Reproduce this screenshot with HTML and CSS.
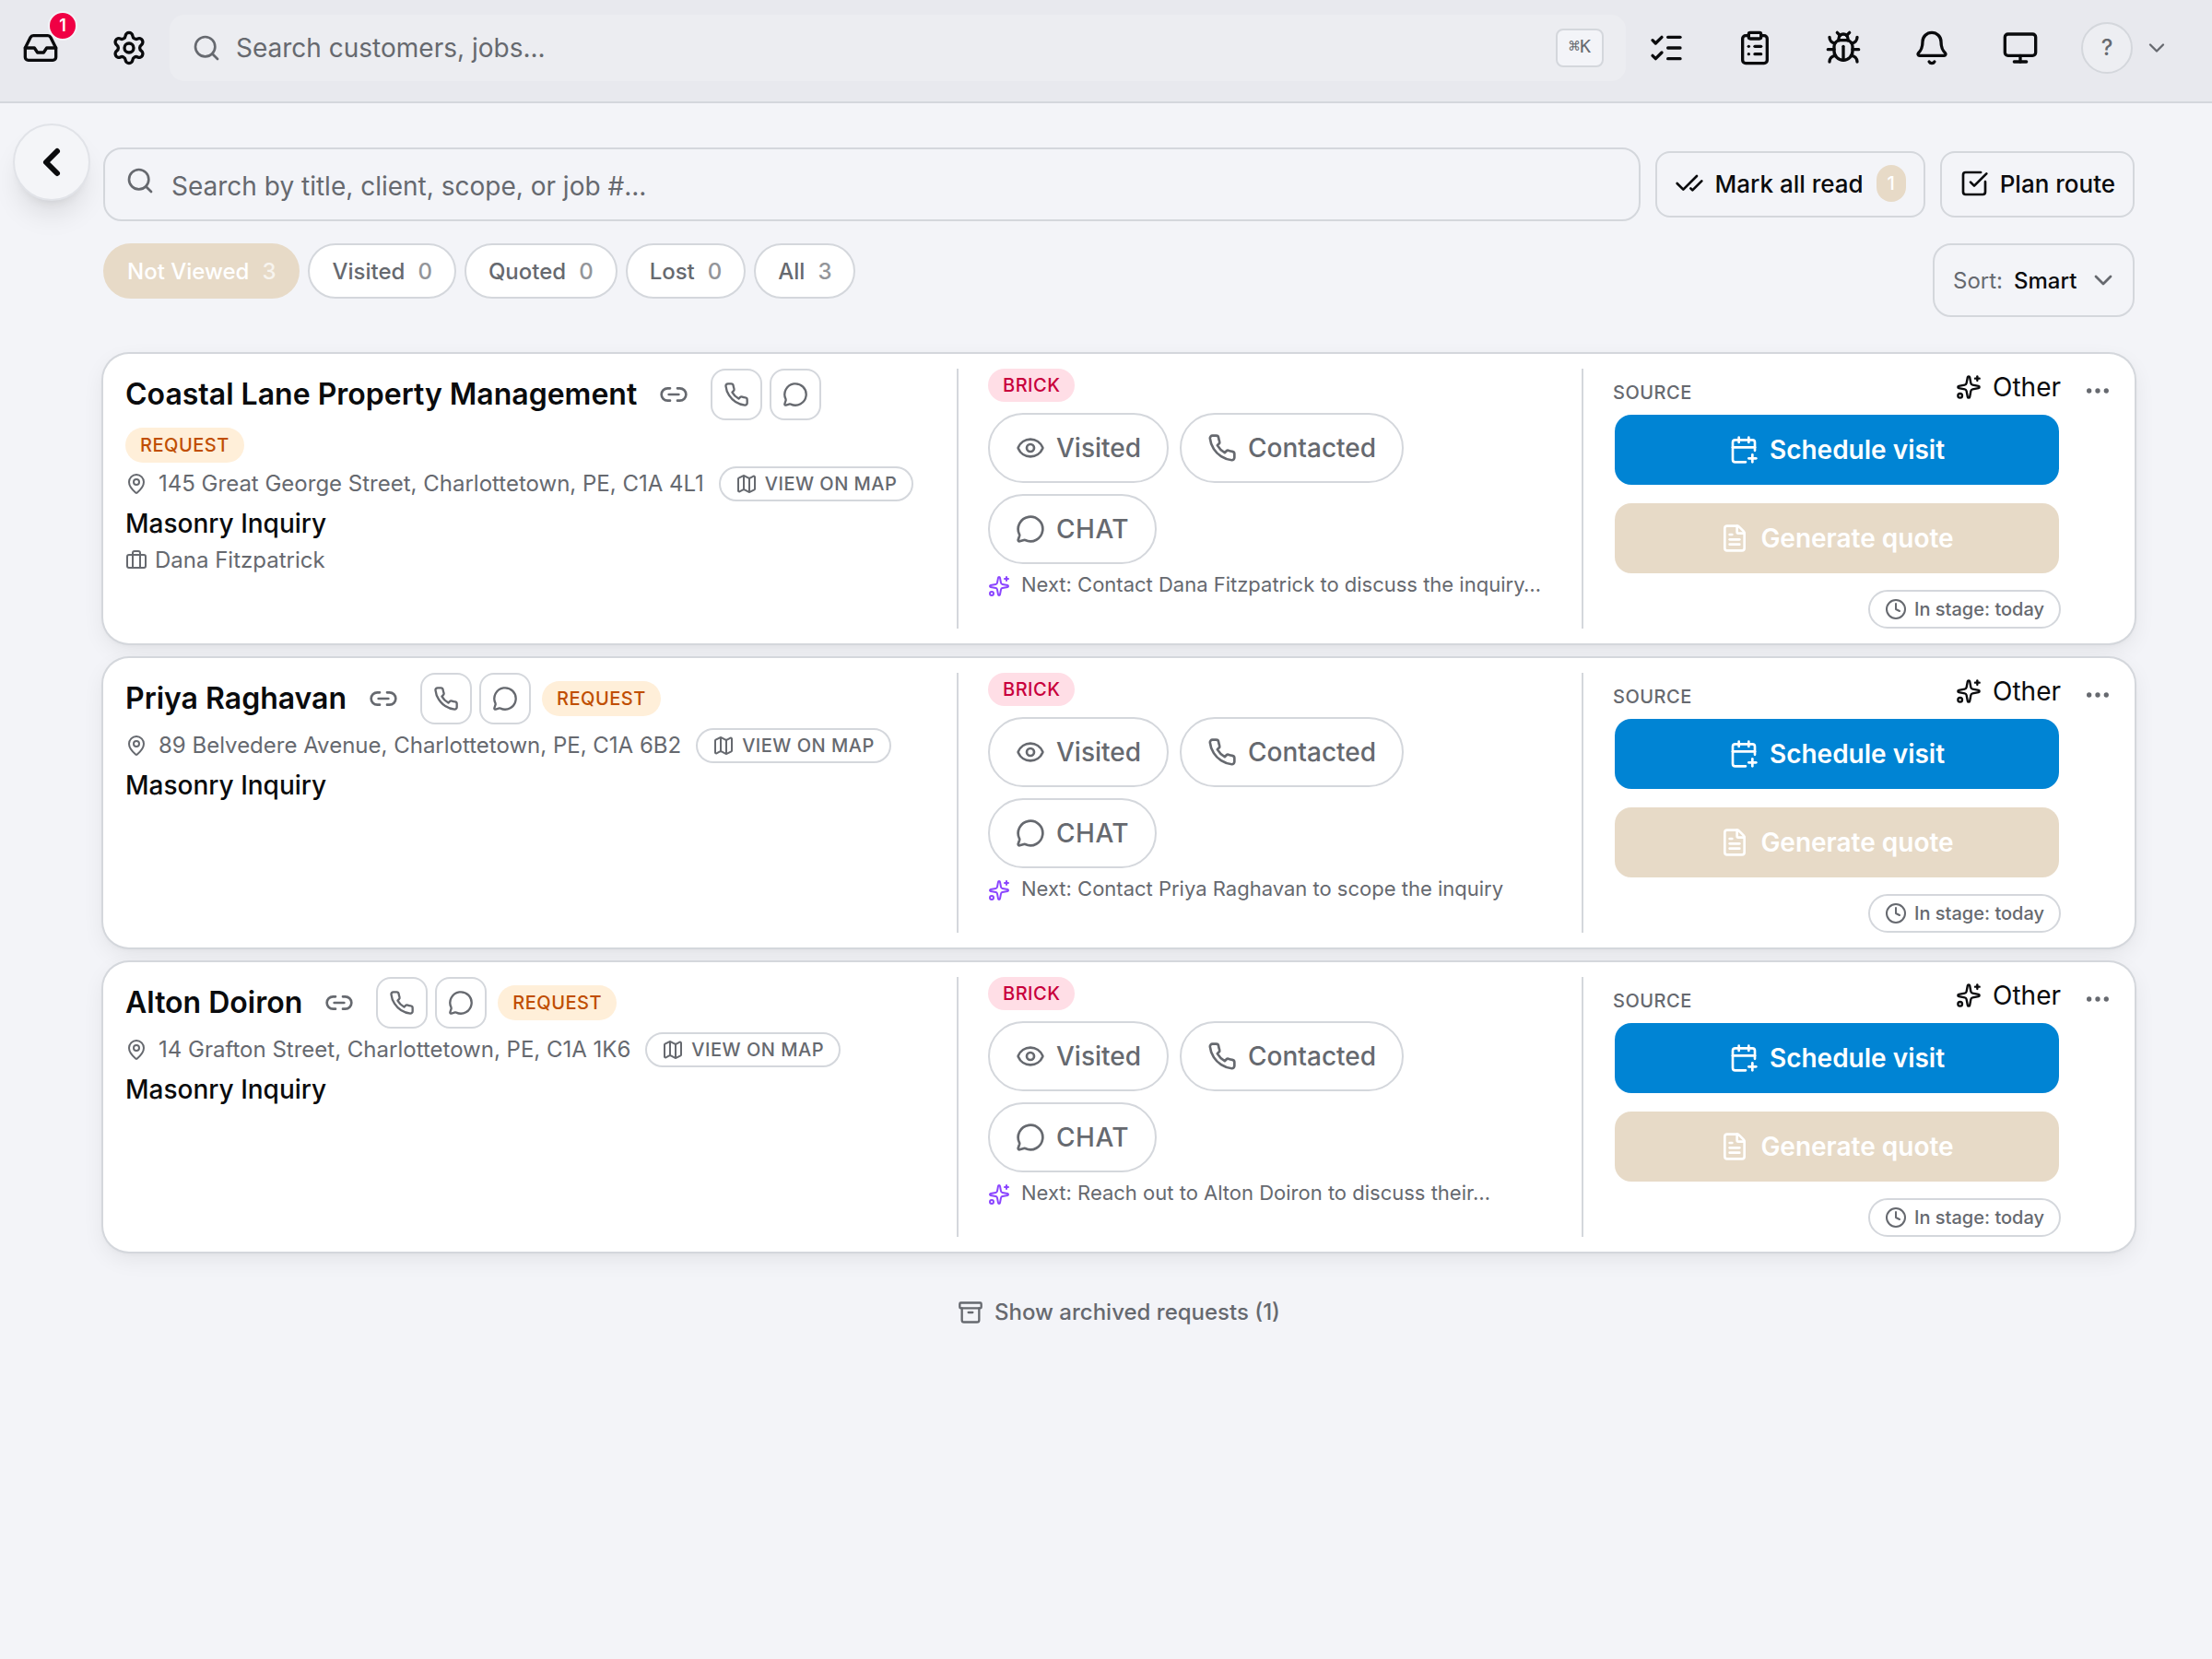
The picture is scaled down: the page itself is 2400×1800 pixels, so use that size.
FILE: index.html
```html
<!DOCTYPE html>
<html lang="en">
<head>
<meta charset="utf-8">
<meta name="viewport" content="width=device-width, initial-scale=1">
<title>Requests</title>
<link rel="stylesheet" href="styles.css">
</head>
<body>
<svg class="sprite" aria-hidden="true">
  <symbol id="i-inbox" viewBox="0 0 24 24"><path d="M22 12h-6l-2 3h-4l-2-3H2"/><path d="M5.45 5.11 2 12v6a2 2 0 0 0 2 2h16a2 2 0 0 0 2-2v-6l-3.45-6.89A2 2 0 0 0 16.76 4H7.24a2 2 0 0 0-1.79 1.11z"/></symbol>
  <symbol id="i-settings" viewBox="0 0 24 24"><path d="M9.671 4.136a2.34 2.34 0 0 1 4.659 0 2.34 2.34 0 0 0 3.319 1.915 2.34 2.34 0 0 1 2.33 4.033 2.34 2.34 0 0 0 0 3.831 2.34 2.34 0 0 1-2.33 4.033 2.34 2.34 0 0 0-3.319 1.915 2.34 2.34 0 0 1-4.659 0 2.34 2.34 0 0 0-3.32-1.915 2.34 2.34 0 0 1-2.33-4.033 2.34 2.34 0 0 0 0-3.831A2.34 2.34 0 0 1 6.35 6.051a2.34 2.34 0 0 0 3.319-1.915"/><circle cx="12" cy="12" r="3"/></symbol>
  <symbol id="i-search" viewBox="0 0 24 24"><path d="m21 21-4.34-4.34"/><circle cx="11" cy="11" r="8"/></symbol>
  <symbol id="i-list-checks" viewBox="0 0 24 24"><path d="M13 5h8"/><path d="M13 12h8"/><path d="M13 19h8"/><path d="m3 17 2 2 4-4"/><path d="m3 7 2 2 4-4"/></symbol>
  <symbol id="i-clipboard" viewBox="0 0 24 24"><rect width="8" height="4" x="8" y="2" rx="1" ry="1"/><path d="M16 4h2a2 2 0 0 1 2 2v14a2 2 0 0 1-2 2H6a2 2 0 0 1-2-2V6a2 2 0 0 1 2-2h2"/><path d="M12 11h4"/><path d="M12 16h4"/><path d="M8 11h.01"/><path d="M8 16h.01"/></symbol>
  <symbol id="i-bug" viewBox="0 0 24 24"><path d="M12 20v-9"/><path d="M14 7a4 4 0 0 1 4 4v3a6 6 0 0 1-12 0v-3a4 4 0 0 1 4-4z"/><path d="M14.12 3.88 16 2"/><path d="M21 21a4 4 0 0 0-3.81-4"/><path d="M21 5a4 4 0 0 1-3.55 3.97"/><path d="M22 13h-4"/><path d="M3 21a4 4 0 0 1 3.81-4"/><path d="M3 5a4 4 0 0 0 3.55 3.97"/><path d="M6 13H2"/><path d="m8 2 1.88 1.88"/><path d="M9 7.13V6a3 3 0 1 1 6 0v1.13"/></symbol>
  <symbol id="i-bell" viewBox="0 0 24 24"><path d="M10.268 21a2 2 0 0 0 3.464 0"/><path d="M3.262 15.326A1 1 0 0 0 4 17h16a1 1 0 0 0 .74-1.673C19.41 13.956 18 12.499 18 8A6 6 0 0 0 6 8c0 4.499-1.411 5.956-2.738 7.326"/></symbol>
  <symbol id="i-monitor" viewBox="0 0 24 24"><rect width="20" height="14" x="2" y="3" rx="2"/><path d="M8 21h8"/><path d="M12 17v4"/></symbol>
  <symbol id="i-chevron-down" viewBox="0 0 24 24"><path d="m6 9 6 6 6-6"/></symbol>
  <symbol id="i-chevron-left" viewBox="0 0 24 24"><path d="m15 18-6-6 6-6"/></symbol>
  <symbol id="i-check-check" viewBox="0 0 24 24"><path d="M18 6 7 17l-5-5"/><path d="m22 10-7.5 7.5L13 16"/></symbol>
  <symbol id="i-square-check" viewBox="0 0 24 24"><path d="M21 10.656V19a2 2 0 0 1-2 2H5a2 2 0 0 1-2-2V5a2 2 0 0 1 2-2h12.344"/><path d="m9 11 3 3L22 4"/></symbol>
  <symbol id="i-link" viewBox="0 0 24 24"><path d="M9 17H7A5 5 0 0 1 7 7h2"/><path d="M15 7h2a5 5 0 1 1 0 10h-2"/><path d="M8 12h8"/></symbol>
  <symbol id="i-phone" viewBox="0 0 24 24"><path d="M22 16.92v3a2 2 0 0 1-2.18 2 19.79 19.79 0 0 1-8.63-3.07 19.5 19.5 0 0 1-6-6 19.79 19.79 0 0 1-3.07-8.67A2 2 0 0 1 4.11 2h3a2 2 0 0 1 2 1.72 12.84 12.84 0 0 0 .7 2.81 2 2 0 0 1-.45 2.11L8.09 9.91a16 16 0 0 0 6 6l1.27-1.27a2 2 0 0 1 2.11-.45 12.84 12.84 0 0 0 2.81.7A2 2 0 0 1 22 16.92z"/></symbol>
  <symbol id="i-chat" viewBox="0 0 24 24"><path d="M2.992 16.342a2 2 0 0 1 .094 1.167l-1.065 3.29a1 1 0 0 0 1.236 1.168l3.413-.998a2 2 0 0 1 1.099.092 10 10 0 1 0-4.777-4.719"/></symbol>
  <symbol id="i-pin" viewBox="0 0 24 24"><path d="M20 10c0 4.993-5.539 10.193-7.399 11.799a1 1 0 0 1-1.202 0C9.539 20.193 4 14.993 4 10a8 8 0 0 1 16 0"/><circle cx="12" cy="10" r="3"/></symbol>
  <symbol id="i-map" viewBox="0 0 24 24"><path d="M14.106 5.553a2 2 0 0 0 1.788 0l3.659-1.83A1 1 0 0 1 21 4.619v12.764a1 1 0 0 1-.553.894l-4.553 2.277a2 2 0 0 1-1.788 0l-4.212-2.106a2 2 0 0 0-1.788 0l-3.659 1.83A1 1 0 0 1 3 19.381V6.618a1 1 0 0 1 .553-.894l4.553-2.277a2 2 0 0 1 1.788 0z"/><path d="M15 5.764v15"/><path d="M9 3.236v15"/></symbol>
  <symbol id="i-briefcase" viewBox="0 0 24 24"><path d="M16 20V4a2 2 0 0 0-2-2h-4a2 2 0 0 0-2 2v16"/><rect width="20" height="14" x="2" y="6" rx="2"/></symbol>
  <symbol id="i-eye" viewBox="0 0 24 24"><path d="M2.062 12.348a1 1 0 0 1 0-.696 10.75 10.75 0 0 1 19.876 0 1 1 0 0 1 0 .696 10.75 10.75 0 0 1-19.876 0"/><circle cx="12" cy="12" r="3"/></symbol>
  <symbol id="i-sparkles" viewBox="0 0 24 24"><path d="M11.017 2.814a1 1 0 0 1 1.966 0l1.051 5.558a2 2 0 0 0 1.594 1.594l5.558 1.051a1 1 0 0 1 0 1.966l-5.558 1.051a2 2 0 0 0-1.594 1.594l-1.051 5.558a1 1 0 0 1-1.966 0l-1.051-5.558a2 2 0 0 0-1.594-1.594l-5.558-1.051a1 1 0 0 1 0-1.966l5.558-1.051a2 2 0 0 0 1.594-1.594z"/><path d="M20 2v4"/><path d="M22 4h-4"/><circle cx="4" cy="20" r="2"/></symbol>
  <symbol id="i-calendar-plus" viewBox="0 0 24 24"><path d="M16 19h6"/><path d="M16 2v4"/><path d="M19 16v6"/><path d="M21 12.598V6a2 2 0 0 0-2-2H5a2 2 0 0 0-2 2v14a2 2 0 0 0 2 2h8.5"/><path d="M3 10h18"/><path d="M8 2v4"/></symbol>
  <symbol id="i-file" viewBox="0 0 24 24"><path d="M6 22a2 2 0 0 1-2-2V4a2 2 0 0 1 2-2h8a2.4 2.4 0 0 1 1.704.706l3.588 3.588A2.4 2.4 0 0 1 20 8v12a2 2 0 0 1-2 2z"/><path d="M14 2v5a1 1 0 0 0 1 1h5"/><path d="M10 9H8"/><path d="M16 13H8"/><path d="M16 17H8"/></symbol>
  <symbol id="i-clock" viewBox="0 0 24 24"><circle cx="12" cy="12" r="10"/><path d="M12 6v6l4 2"/></symbol>
  <symbol id="i-more" viewBox="0 0 24 24"><circle cx="12" cy="12" r="1"/><circle cx="19" cy="12" r="1"/><circle cx="5" cy="12" r="1"/></symbol>
  <symbol id="i-archive" viewBox="0 0 24 24"><rect width="20" height="5" x="2" y="3" rx="1"/><path d="M4 8v11a2 2 0 0 0 2 2h12a2 2 0 0 0 2-2V8"/><path d="M10 12h4"/></symbol>
</svg>

<header class="topbar">
  <button class="nav-btn" type="button" aria-label="Inbox"><svg class="icon icon-xl"><use href="#i-inbox"/></svg><span class="nav-badge">1</span></button>
  <button class="nav-btn" type="button" aria-label="Settings"><svg class="icon icon-xl"><use href="#i-settings"/></svg></button>
  <label class="global-search">
    <svg class="icon icon-lg"><use href="#i-search"/></svg>
    <input type="search" placeholder="Search customers, jobs..." aria-label="Search customers, jobs">
    <kbd>⌘K</kbd>
  </label>
  <button class="nav-btn" type="button" aria-label="Tasks"><svg class="icon icon-xl"><use href="#i-list-checks"/></svg></button>
  <button class="nav-btn" type="button" aria-label="Clipboard"><svg class="icon icon-xl"><use href="#i-clipboard"/></svg></button>
  <button class="nav-btn" type="button" aria-label="Report a bug"><svg class="icon icon-xl"><use href="#i-bug"/></svg></button>
  <button class="nav-btn" type="button" aria-label="Notifications"><svg class="icon icon-xl"><use href="#i-bell"/></svg></button>
  <button class="nav-btn" type="button" aria-label="Display"><svg class="icon icon-xl"><use href="#i-monitor"/></svg></button>
  <button class="account" type="button" aria-label="Account"><span class="avatar">?</span><svg class="icon icon-md"><use href="#i-chevron-down"/></svg></button>
</header>

<button class="back" type="button" aria-label="Back"><svg class="icon"><use href="#i-chevron-left"/></svg></button>

<main class="page">
  <div class="toolbar">
    <label class="job-search">
      <svg class="icon icon-lg"><use href="#i-search"/></svg>
      <input type="search" placeholder="Search by title, client, scope, or job #..." aria-label="Search requests">
    </label>
    <button class="tool-btn" type="button"><svg class="icon icon-lg"><use href="#i-check-check"/></svg>Mark all read<span class="tool-count">1</span></button>
    <button class="tool-btn" type="button"><svg class="icon icon-lg"><use href="#i-square-check"/></svg>Plan route</button>
  </div>

  <div class="filters">
    <div class="chips">
      <button class="chip chip-active" type="button">Not Viewed<span>3</span></button>
      <button class="chip" type="button">Visited<span>0</span></button>
      <button class="chip" type="button">Quoted<span>0</span></button>
      <button class="chip" type="button">Lost<span>0</span></button>
      <button class="chip" type="button">All<span>3</span></button>
    </div>
    <label class="sort"><span>Sort:</span><select><option>Smart</option></select><svg class="icon icon-lg"><use href="#i-chevron-down"/></svg></label>
  </div>

  <section class="cards">
    <article class="card">
      <div class="client">
        <div class="client-head">
          <h2>Coastal Lane Property Management</h2>
          <button class="link-btn" type="button" aria-label="Copy link"><svg class="icon icon-lg"><use href="#i-link"/></svg></button>
          <div class="contact-btns">
            <button class="square-btn" type="button" aria-label="Call"><svg class="icon icon-md"><use href="#i-phone"/></svg></button>
            <button class="square-btn" type="button" aria-label="Message"><svg class="icon icon-md"><use href="#i-chat"/></svg></button>
          </div>
          <span class="tag tag-request">REQUEST</span>
        </div>
        <div class="address"><svg class="icon icon-sm"><use href="#i-pin"/></svg><span>145 Great George Street, Charlottetown, PE, C1A 4L1</span><a class="map-link" href="#map"><svg class="icon icon-sm"><use href="#i-map"/></svg>VIEW ON MAP</a></div>
        <h3>Masonry Inquiry</h3>
        <p class="person"><svg class="icon icon-sm"><use href="#i-briefcase"/></svg>Dana Fitzpatrick</p>
      </div>
      <div class="status">
        <span class="tag tag-brick">BRICK</span>
        <div class="status-btns">
          <button class="pill-btn" type="button"><svg class="icon icon-lg"><use href="#i-eye"/></svg>Visited</button>
          <button class="pill-btn" type="button"><svg class="icon icon-lg"><use href="#i-phone"/></svg>Contacted</button>
          <button class="pill-btn pill-caps" type="button"><svg class="icon icon-lg"><use href="#i-chat"/></svg>CHAT</button>
        </div>
        <p class="next"><svg class="icon icon-sm"><use href="#i-sparkles"/></svg>Next: Contact Dana Fitzpatrick to discuss the inquiry…</p>
      </div>
      <div class="actions">
        <div class="source"><span class="source-label">SOURCE</span><span class="source-value"><svg class="icon icon-md"><use href="#i-sparkles"/></svg>Other</span></div>
        <button class="action action-primary" type="button"><svg class="icon icon-lg"><use href="#i-calendar-plus"/></svg>Schedule visit</button>
        <button class="action action-quote" type="button"><svg class="icon icon-lg"><use href="#i-file"/></svg>Generate quote</button>
        <span class="stage"><svg class="icon icon-sm"><use href="#i-clock"/></svg>In stage: today</span>
      </div>
      <button class="more" type="button" aria-label="More"><svg class="icon icon-lg"><use href="#i-more"/></svg></button>
    </article>

    <article class="card">
      <div class="client">
        <div class="client-head">
          <h2>Priya Raghavan</h2>
          <button class="link-btn" type="button" aria-label="Copy link"><svg class="icon icon-lg"><use href="#i-link"/></svg></button>
          <div class="contact-btns">
            <button class="square-btn" type="button" aria-label="Call"><svg class="icon icon-md"><use href="#i-phone"/></svg></button>
            <button class="square-btn" type="button" aria-label="Message"><svg class="icon icon-md"><use href="#i-chat"/></svg></button>
          </div>
          <span class="tag tag-request">REQUEST</span>
        </div>
        <div class="address"><svg class="icon icon-sm"><use href="#i-pin"/></svg><span>89 Belvedere Avenue, Charlottetown, PE, C1A 6B2</span><a class="map-link" href="#map"><svg class="icon icon-sm"><use href="#i-map"/></svg>VIEW ON MAP</a></div>
        <h3>Masonry Inquiry</h3>
      </div>
      <div class="status">
        <span class="tag tag-brick">BRICK</span>
        <div class="status-btns">
          <button class="pill-btn" type="button"><svg class="icon icon-lg"><use href="#i-eye"/></svg>Visited</button>
          <button class="pill-btn" type="button"><svg class="icon icon-lg"><use href="#i-phone"/></svg>Contacted</button>
          <button class="pill-btn pill-caps" type="button"><svg class="icon icon-lg"><use href="#i-chat"/></svg>CHAT</button>
        </div>
        <p class="next"><svg class="icon icon-sm"><use href="#i-sparkles"/></svg>Next: Contact Priya Raghavan to scope the inquiry</p>
      </div>
      <div class="actions">
        <div class="source"><span class="source-label">SOURCE</span><span class="source-value"><svg class="icon icon-md"><use href="#i-sparkles"/></svg>Other</span></div>
        <button class="action action-primary" type="button"><svg class="icon icon-lg"><use href="#i-calendar-plus"/></svg>Schedule visit</button>
        <button class="action action-quote" type="button"><svg class="icon icon-lg"><use href="#i-file"/></svg>Generate quote</button>
        <span class="stage"><svg class="icon icon-sm"><use href="#i-clock"/></svg>In stage: today</span>
      </div>
      <button class="more" type="button" aria-label="More"><svg class="icon icon-lg"><use href="#i-more"/></svg></button>
    </article>

    <article class="card">
      <div class="client">
        <div class="client-head">
          <h2>Alton Doiron</h2>
          <button class="link-btn" type="button" aria-label="Copy link"><svg class="icon icon-lg"><use href="#i-link"/></svg></button>
          <div class="contact-btns">
            <button class="square-btn" type="button" aria-label="Call"><svg class="icon icon-md"><use href="#i-phone"/></svg></button>
            <button class="square-btn" type="button" aria-label="Message"><svg class="icon icon-md"><use href="#i-chat"/></svg></button>
          </div>
          <span class="tag tag-request">REQUEST</span>
        </div>
        <div class="address"><svg class="icon icon-sm"><use href="#i-pin"/></svg><span>14 Grafton Street, Charlottetown, PE, C1A 1K6</span><a class="map-link" href="#map"><svg class="icon icon-sm"><use href="#i-map"/></svg>VIEW ON MAP</a></div>
        <h3>Masonry Inquiry</h3>
      </div>
      <div class="status">
        <span class="tag tag-brick">BRICK</span>
        <div class="status-btns">
          <button class="pill-btn" type="button"><svg class="icon icon-lg"><use href="#i-eye"/></svg>Visited</button>
          <button class="pill-btn" type="button"><svg class="icon icon-lg"><use href="#i-phone"/></svg>Contacted</button>
          <button class="pill-btn pill-caps" type="button"><svg class="icon icon-lg"><use href="#i-chat"/></svg>CHAT</button>
        </div>
        <p class="next"><svg class="icon icon-sm"><use href="#i-sparkles"/></svg>Next: Reach out to Alton Doiron to discuss their…</p>
      </div>
      <div class="actions">
        <div class="source"><span class="source-label">SOURCE</span><span class="source-value"><svg class="icon icon-md"><use href="#i-sparkles"/></svg>Other</span></div>
        <button class="action action-primary" type="button"><svg class="icon icon-lg"><use href="#i-calendar-plus"/></svg>Schedule visit</button>
        <button class="action action-quote" type="button"><svg class="icon icon-lg"><use href="#i-file"/></svg>Generate quote</button>
        <span class="stage"><svg class="icon icon-sm"><use href="#i-clock"/></svg>In stage: today</span>
      </div>
      <button class="more" type="button" aria-label="More"><svg class="icon icon-lg"><use href="#i-more"/></svg></button>
    </article>
  </section>

  <button class="archived" type="button"><svg class="icon icon-md"><use href="#i-archive"/></svg>Show archived requests (1)</button>
</main>
</body>
</html>
```
FILE: styles.css
```css
:root {
  --ink: #0a0b0d;
  --muted: #66696f;
  --line: #d4d7dc;
  --page: #f3f4f8;
  --sand: #e7dac7;
}

* { box-sizing: border-box; }

body {
  margin: 0;
  min-height: 100vh;
  background: var(--page);
  color: var(--ink);
  font-family: Inter, "Liberation Sans", sans-serif;
  font-size: 28px;
}

h2, h3, p { margin: 0; }

button, input, select {
  margin: 0;
  padding: 0;
  border: 0;
  background: none;
  color: inherit;
  font: inherit;
}

button { cursor: pointer; }

.sprite { display: none; }

.icon {
  display: block;
  flex: none;
  fill: none;
  stroke: currentColor;
  stroke-width: 2;
  stroke-linecap: round;
  stroke-linejoin: round;
}
.icon-sm { width: 24px; height: 24px; }
.icon-md { width: 28px; height: 28px; }
.icon-lg { width: 32px; height: 32px; }
.icon-xl { width: 40px; height: 40px; }

/* Top bar */
.topbar {
  display: flex;
  align-items: center;
  padding: 16px 46px 22px 0;
  border-bottom: 2px solid var(--line);
  background: #e8e9ee;
}

.nav-btn {
  position: relative;
  display: grid;
  place-items: center;
  width: 88px;
  height: 72px;
  margin-right: 8px;
}

.nav-badge {
  position: absolute;
  top: -4px;
  right: 4px;
  width: 32px;
  height: 32px;
  border: 2px solid var(--page);
  border-radius: 50%;
  background: #f00044;
  color: #fff;
  font-size: 18px;
  font-weight: 600;
  line-height: 28px;
  text-align: center;
}

.global-search {
  display: flex;
  flex: 1;
  align-items: center;
  gap: 16px;
  height: 72px;
  margin-left: -8px;
  padding: 0 24px;
  border-radius: 16px;
  background: #ecedf1;
  color: var(--muted);
}

input {
  flex: 1;
  min-width: 0;
  outline: 0;
  appearance: none;
}
input::placeholder { color: var(--muted); opacity: 1; }

kbd {
  height: 42px;
  padding: 0 12px;
  border: 2px solid var(--line);
  border-radius: 8px;
  background: var(--page);
  font-family: "DejaVu Sans Mono", monospace;
  font-size: 20px;
  line-height: 34px;
}

.account {
  display: flex;
  align-items: center;
  gap: 12px;
  margin-left: 14px;
  color: var(--muted);
}

.avatar {
  width: 56px;
  height: 56px;
  border: 2px solid var(--line);
  border-radius: 50%;
  background: #edeef2;
  font-size: 24px;
  font-weight: 500;
  line-height: 52px;
}

/* Floating back control */
.back {
  position: absolute;
  top: 134px;
  left: 14px;
  display: grid;
  place-items: center;
  width: 84px;
  height: 84px;
  border: 2px solid #e1e3e8;
  border-radius: 50%;
  background: #f4f5f8;
  box-shadow: 0 20px 30px -6px rgb(0 0 0 / 10%), 0 8px 12px -8px rgb(0 0 0 / 10%);
}
.back .icon { width: 48px; height: 48px; stroke-width: 3; }

/* Page */
.page {
  display: flex;
  flex-direction: column;
  padding: 48px 84px 48px 112px;
}

.toolbar {
  display: flex;
  align-items: center;
  gap: 16px;
}

.job-search {
  display: flex;
  flex: 1;
  gap: 18px;
  height: 80px;
  padding: 18px 22px;
  border: 2px solid var(--line);
  border-radius: 20px;
  color: var(--muted);
}
.job-search input { height: 44px; }

.tool-btn {
  display: flex;
  align-items: center;
  gap: 12px;
  height: 72px;
  padding: 0 19px 2px;
  border: 2px solid var(--line);
  border-radius: 16px;
  font-size: 26px;
  font-weight: 500;
}

.tool-count {
  min-width: 32px;
  height: 40px;
  margin-left: 2px;
  border-radius: 20px;
  background: var(--sand);
  color: #fff;
  font-size: 20px;
  line-height: 40px;
}

.filters {
  display: flex;
  align-items: flex-start;
  justify-content: space-between;
  margin-top: 24px;
}

.chips { display: flex; gap: 9px; }

.chip {
  display: flex;
  align-items: center;
  gap: 14px;
  height: 60px;
  padding: 0 24px;
  border: 2px solid var(--line);
  border-radius: 30px;
  background: #fff;
  color: var(--muted);
  font-size: 24px;
  font-weight: 500;
}
.chip span { opacity: .7; }
.chip-active {
  border-color: var(--sand);
  background: var(--sand);
  color: #fff;
}

.sort {
  display: flex;
  align-items: center;
  gap: 12px;
  height: 80px;
  padding: 0 16px 0 20px;
  border: 2px solid var(--line);
  border-radius: 20px;
  color: var(--muted);
  font-size: 24px;
}
.sort select {
  appearance: none;
  color: var(--ink);
  font-weight: 500;
}

/* Request cards */
.cards {
  display: grid;
  gap: 16px;
  margin-top: 40px;
}

.card {
  display: grid;
  grid-template-columns: 902fr 678fr 536fr 48px;
  padding: 16px 16px 16px 24px;
  border-radius: 28px;
  background: #fff;
  box-shadow: 0 0 0 2px var(--line), 0 2px 6px rgb(0 0 0 / 4%), 0 8px 24px rgb(0 0 0 / 7%);
}

.client {
  display: flex;
  flex-direction: column;
  align-items: flex-start;
  gap: 4px;
  min-width: 0;
  padding-right: 32px;
}

.client-head {
  display: flex;
  flex-wrap: wrap;
  align-items: center;
  gap: 8px 12px;
}

h2 {
  font-size: 32px;
  font-weight: 600;
  line-height: 40px;
}

h3 {
  font-size: 28px;
  font-weight: 500;
  line-height: 40px;
}

.link-btn, .square-btn {
  display: grid;
  place-items: center;
  width: 56px;
  height: 56px;
  color: var(--muted);
}
.square-btn {
  border: 2px solid var(--line);
  border-radius: 16px;
}
.contact-btns { display: flex; gap: 8px; }

.tag {
  padding: 0 16px;
  border-radius: 19px;
  font-size: 20px;
  font-weight: 500;
  letter-spacing: .5px;
  line-height: 38px;
}
.tag-request { background: #ffefd9; color: #c04e00; }
.tag-brick { background: #ffdee6; color: #c8003c; line-height: 36px; }

.address, .person {
  display: flex;
  align-items: center;
  gap: 12px;
  color: var(--muted);
  font-size: 24px;
  line-height: 32px;
}
.person { gap: 8px; }

.map-link {
  display: flex;
  align-items: center;
  gap: 8px;
  height: 38px;
  margin-left: 4px;
  padding: 0 16px;
  border: 2px solid var(--line);
  border-radius: 19px;
  color: inherit;
  font-size: 20px;
  font-weight: 500;
  letter-spacing: .5px;
  text-decoration: none;
}

.status {
  display: flex;
  flex-direction: column;
  align-items: flex-start;
  min-width: 0;
  padding: 0 32px;
  border-left: 2px solid var(--line);
  color: var(--muted);
}

.status-btns {
  display: flex;
  flex-wrap: wrap;
  gap: 12px;
  max-width: 480px;
  margin: 12px 0 8px;
}

.pill-btn {
  display: flex;
  align-items: center;
  gap: 12px;
  height: 76px;
  padding: 0 28px;
  border: 2px solid var(--line);
  border-radius: 38px;
  font-weight: 500;
}
.pill-caps { letter-spacing: .5px; }

.next {
  display: flex;
  gap: 12px;
  font-size: 22px;
  line-height: 28px;
}
.next .icon { margin-top: 4px; color: #8b45ff; }

.actions {
  display: flex;
  flex-direction: column;
  padding: 0 16px 0 32px;
  border-left: 2px solid var(--line);
}

.source {
  display: flex;
  align-items: flex-end;
  justify-content: space-between;
  margin-bottom: 8px;
}
.source-label {
  color: var(--muted);
  font-size: 20px;
  font-weight: 500;
  letter-spacing: .5px;
  line-height: 28px;
}
.source-value {
  display: flex;
  align-items: center;
  gap: 12px;
  line-height: 40px;
}

.action {
  display: flex;
  align-items: center;
  justify-content: center;
  gap: 12px;
  height: 80px;
  margin-bottom: 16px;
  border: 2px solid transparent;
  border-radius: 20px;
  background-clip: padding-box;
  color: #fff;
  font-weight: 600;
}
.action-primary { background-color: #0084d4; }
.action-quote { background-color: var(--sand); }

.stage {
  display: flex;
  align-items: center;
  align-self: flex-end;
  gap: 8px;
  height: 42px;
  padding: 0 16px;
  border: 2px solid var(--line);
  border-radius: 21px;
  color: var(--muted);
  font-size: 20px;
  font-weight: 500;
}

.more {
  display: grid;
  place-items: center;
  width: 48px;
  height: 48px;
  color: var(--muted);
}

.archived {
  display: flex;
  align-items: center;
  align-self: center;
  gap: 12px;
  margin-top: 46px;
  color: var(--muted);
  font-size: 24px;
  font-weight: 500;
  line-height: 40px;
}
```
